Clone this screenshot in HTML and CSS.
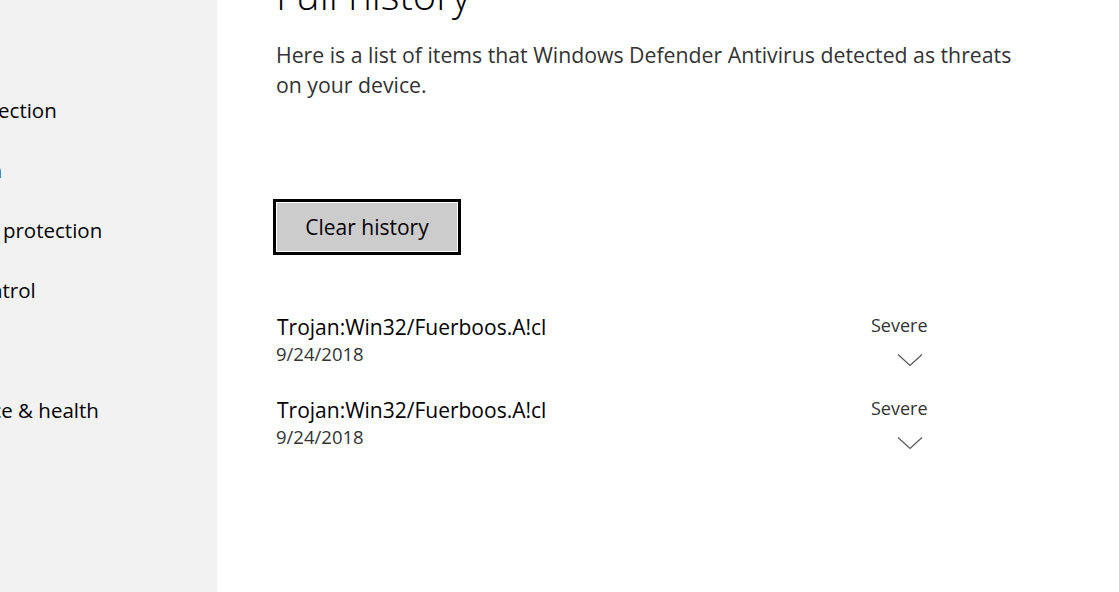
FILE: index.html
```html
<!DOCTYPE html>
<html lang="en">
<head>
<meta charset="utf-8">
<title>Full history</title>
<link rel="stylesheet" href="styles.css">
</head>
<body>
<div class="app">
  <nav class="sidebar">
    <ul class="nav">
      <li class="nav-item">Home</li>
      <li class="nav-item">Virus &amp; threat protection</li>
      <li class="nav-item">Account protection</li>
      <li class="nav-item">Firewall &amp; network protection</li>
      <li class="nav-item">App &amp; browser control</li>
      <li class="nav-item">Device security</li>
      <li class="nav-item">Device performance &amp; health</li>
      <li class="nav-item">Family options</li>
    </ul>
  </nav>
  <main class="content">
    <h1 class="title">Full history</h1>
    <p class="intro">Here is a list of items that Windows Defender Antivirus detected as threats on your device.</p>
    <button class="clear-btn" type="button">Clear history</button>
    <ul class="threats">
      <li class="threat">
        <div class="threat-info">
          <div class="threat-name">Trojan:Win32/Fuerboos.A!cl</div>
          <div class="threat-date">9/24/2018</div>
        </div>
        <div class="threat-sev">
          <span class="sev-label">Severe</span>
          <svg class="chevron" width="26" height="14" viewBox="0 0 26 14"><path d="M1 1.5 L13 12.5 L25 1.5" fill="none" stroke="#555" stroke-width="1.2"/></svg>
        </div>
      </li>
      <li class="threat">
        <div class="threat-info">
          <div class="threat-name">Trojan:Win32/Fuerboos.A!cl</div>
          <div class="threat-date">9/24/2018</div>
        </div>
        <div class="threat-sev">
          <span class="sev-label">Severe</span>
          <svg class="chevron" width="26" height="14" viewBox="0 0 26 14"><path d="M1 1.5 L13 12.5 L25 1.5" fill="none" stroke="#555" stroke-width="1.2"/></svg>
        </div>
      </li>
    </ul>
  </main>
</div>
</body>
</html>
```
FILE: styles.css
```css
* { box-sizing: border-box; }
html, body { margin: 0; padding: 0; height: 100%; }
body {
  font-family: "Open Sans", "Noto Sans", "Liberation Sans", sans-serif;
  background: #fff;
  color: #000;
  overflow: hidden;
}
.app {
  display: flex;
  height: 592px;
  overflow: hidden;
}
.sidebar {
  width: 217px;
  flex: 0 0 217px;
  background: #f2f2f2;
  overflow: hidden;
}
.nav {
  list-style: none;
  margin: 0 0 0 -180px;
  padding: 20px 0 0 0;
}
.nav-item {
  height: 60px;
  line-height: 60px;
  font-size: 20.5px;
  white-space: nowrap;
  color: #000;
}
.content {
  flex: 1;
  padding-left: 59px;
}
.title {
  margin: -30px 0 0 0;
  font-size: 40px;
  line-height: 50px;
  font-weight: 300;
  color: #000;
}
.intro {
  margin: 20px 0 0 0;
  font-size: 21.25px;
  line-height: 30px;
  color: #333;
  width: 752px;
}
.clear-btn {
  display: block;
  margin: 99px 0 0 -3px;
  width: 188px;
  height: 56px;
  border: 3px solid #000;
  box-shadow: inset 0 0 0 1px #fff;
  background: #ccc;
  font-family: inherit;
  font-size: 21px;
  color: #000;
  padding: 0;
}
.threats {
  list-style: none;
  margin: 58px 0 0 0;
  padding: 0;
}
.threat {
  display: grid;
  grid-template-columns: 595px auto;
  height: 83px;
}
.threat-name {
  font-size: 21px;
  line-height: 28px;
  color: #000;
  padding-left: 1px;
}
.threat-date {
  font-size: 18.5px;
  line-height: 26px;
  color: #333;
}
.threat-sev {
  display: flex;
  flex-direction: column;
  align-items: flex-start;
}
.sev-label {
  font-size: 18px;
  line-height: 24px;
  color: #333;
}
.chevron {
  margin: 16px 0 0 26px;
  display: block;
}
```
